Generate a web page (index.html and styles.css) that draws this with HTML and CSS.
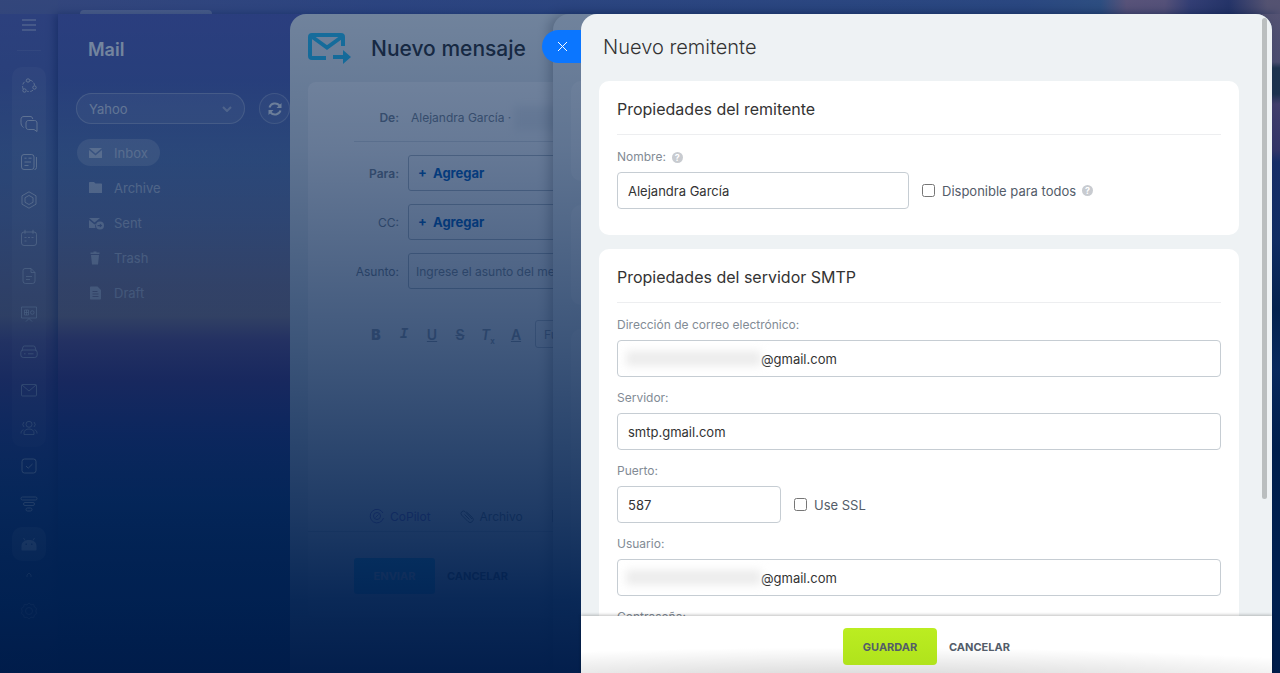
FILE: index.html
```
<!DOCTYPE html>
<html lang="es">
<head>
    <meta charset="UTF-8">
    <meta name="viewport" content="width=device-width, initial-scale=1.0">
    <title>Nuevo remitente</title>
    <link rel="stylesheet" href="styles.css">
</head>
<body>
    <div class="app">
        <nav class="sidebar" aria-label="Menú principal">
            <button class="menu-toggle" aria-label="Menú">
                <svg width="16" height="12" viewBox="0 0 16 12"><path d="M1 1h14M1 6h14M1 11h14"/></svg>
            </button>
            <div class="menu-group">
                <a href="#" class="menu-item" aria-label="Colaboración"><svg viewBox="0 0 18 18"><path d="M10 3.200a5.500 5.500 0 0 1 4.500 5M13 13.200a6 6 0 0 1-6 1M3.200 12a6 6 0 0 1 3-8.200" stroke-dasharray="3 1.500"/><circle cx="8" cy="3.500" r="1.700"/><circle cx="14.500" cy="10.500" r="1.700"/><circle cx="4.500" cy="13.500" r="1.700"/></svg></a>
                <a href="#" class="menu-item bright" aria-label="Chat"><svg viewBox="0 0 18 18"><path d="M3.500 12.500C1.500 11 1 9.500 1 7.500V4.500C1 2.500 2 1.500 4 1.500h6c2 0 2.500 1 2.700 2.500M8.500 5.500h6c1.500 0 2.500 1 2.500 2.500v8.500l-3-2H8.500C7 14.500 6 13.500 6 12V8c0-1.500 1-2.500 2.500-2.500z"/></svg></a>
                <a href="#" class="menu-item bright" aria-label="Noticias"><svg viewBox="0 0 18 18"><rect x="1.500" y="1.500" width="12.500" height="15" rx="2.500"/><path d="M16.500 4v10.500a2 2 0 0 1-2 2M4.500 5.200h2M8.500 5.200h3M4.500 9h6.500M4.500 12.500h4"/></svg></a>
                <a href="#" class="menu-item bright" aria-label="Espacios"><svg viewBox="0 0 18 18"><path d="M9 .8l7 4v8.400l-7 4-7-4V4.800z"/><path d="M9 4.500l4 2.200v4.600l-4 2.200-4-2.200V6.700z"/></svg></a>
                <a href="#" class="menu-item" aria-label="Calendario"><svg viewBox="0 0 18 18"><rect x="1.500" y="3" width="15" height="13.500" rx="2.500"/><path d="M5 .8v4M13 .8v4M4.500 8.500h2M8 8.500h2M11.500 8.500h2M4.500 12h2"/></svg></a>
                <a href="#" class="menu-item" aria-label="Documentos"><svg viewBox="0 0 18 18"><path d="M5 1.500h6l4 4V14a2.500 2.500 0 0 1-2.500 2.500h-7A2.500 2.500 0 0 1 3 14V3.500a2 2 0 0 1 2-2zM11 1.500v4h4M6 9.500h6M6 12.500h4"/></svg></a>
                <a href="#" class="menu-item" aria-label="Pizarras"><svg viewBox="0 0 18 18"><path d="M1.500 2h15v11h-15zM6 16.500l3-3 3 3"/><path d="M4.500 5h4v5h-4zM4.500 7.500h4M6.500 5v5"/><circle cx="12.300" cy="7.500" r="1.800"/></svg></a>
                <a href="#" class="menu-item" aria-label="Drive"><svg viewBox="0 0 18 18"><rect x=".8" y="7" width="16.400" height="7.500" rx="2.500"/><path d="M2 7.500l1-3.500c.3-.8.8-1 1.500-1h9c.7 0 1.200.2 1.500 1l1 3.500M4 10.800h1.500M8 10.800h5.500"/></svg></a>
                <a href="#" class="menu-item" aria-label="Correo"><svg viewBox="0 0 18 18"><rect x="1.500" y="3.500" width="15" height="11.500" rx="1"/><path d="M2 4l7 6 7-6"/></svg></a>
                <a href="#" class="menu-item" aria-label="Grupos"><svg viewBox="0 0 18 18"><circle cx="9" cy="5.300" r="3"/><path d="M4 15.500v-1.500c0-2.500 2-4 5-4s5 1.500 5 4v1.500zM4 3a3.500 3.500 0 0 0 0 5M14 3a3.500 3.500 0 0 1 0 5M1 14.500c0-2 .7-3.200 2.500-3.800M17 14.500c0-2-.7-3.200-2.500-3.800"/></svg></a>
            </div>
            <a href="#" class="menu-item low" aria-label="Tareas"><svg viewBox="0 0 18 18"><rect x="2" y="2" width="14" height="14" rx="2.500"/><path d="M6 9l2.200 2.200L12.500 7"/></svg></a>
            <a href="#" class="menu-item low" aria-label="CRM"><svg viewBox="0 0 18 18"><rect x="1" y="2" width="16" height="3" rx="1.500"/><rect x="3.500" y="7.500" width="11" height="3" rx="1.500"/><rect x="6" y="13" width="6" height="3" rx="1.500"/></svg></a>
            <a href="#" class="menu-item low active" aria-label="Market"><svg viewBox="0 0 18 18"><path class="fill" fill-rule="evenodd" d="M1.500 14.500V11c0-3.500 3-6 7.500-6s7.500 2.500 7.500 6v3.500c0 .8-.5 1-1 1h-13c-.5 0-1-.2-1-1zM5.500 8.500v1.500h1.500V8.500zM11 8.500v1.500h1.500V8.500z"/><path d="M5 5.500L3.500 3M13 5.500L14.500 3"/></svg></a>
            <a href="#" class="menu-more" aria-label="Más"><svg width="6" height="6" viewBox="0 0 6 6"><path d="M1 5V3l2-2 2 2v2"/></svg></a>
            <a href="#" class="menu-item low" aria-label="Ajustes"><svg viewBox="0 0 18 18"><path d="M9 1l2 1.800 2.700-.4.700 2.600L16.700 6.500 15.800 9l.9 2.500-2.300 1.500-.7 2.600-2.700-.4L9 17l-2-1.800-2.700.4-.7-2.600-2.300-1.500L2.200 9l-.9-2.500L3.600 5l.7-2.600 2.700.4z"/><circle cx="9" cy="9" r="3.500"/></svg></a>
        </nav>

        <section class="mail">
            <h2>Mail</h2>
            <div class="mailbox">
                <div class="mailbox-select">
                    <select aria-label="Buzón"><option>Yahoo</option></select>
                    <svg width="10" height="6" viewBox="0 0 10 6"><path d="M1 1l4 4 4-4"/></svg>
                </div>
                <button class="refresh" aria-label="Actualizar">
                    <svg width="16" height="16" viewBox="0 0 16 16"><path d="M2.500 6.500a5.800 5.800 0 0 1 10-2M13.500 9.500a5.800 5.800 0 0 1-10 2"/><path class="fill" d="M14.500 2v5h-5zM1.500 14V9h5z"/></svg>
                </button>
            </div>
            <ul class="folders">
                <li><a href="#" class="current"><svg viewBox="0 0 16 14"><path d="M1 2h13L7.500 7.500zM1 4l6.500 5.500L14 4v8H1z"/></svg>Inbox</a></li>
                <li><a href="#"><svg viewBox="0 0 16 14"><path d="M1 2c0-.6.400-1 1-1h4l1.500 1.500H13c.6 0 1 .4 1 1V12H1z"/></svg>Archive</a></li>
                <li><a href="#"><svg viewBox="0 0 16 14"><path d="M1 2h11L6.500 6.500zM1 4l5.500 4.500L8 7.500A5 5 0 0 0 7.500 12H1z"/><path fill-rule="evenodd" d="M12 5.500a4 4 0 1 1 0 8 4 4 0 0 1 0-8zM9.500 9v1.200h2.300v1.600l2.500-2.200-2.500-2.200V9z"/></svg>Sent</a></li>
                <li><a href="#"><svg viewBox="0 0 16 14"><path d="M2.500 1.500h3V.5h3v1h3V3h-9zM3 4h8l-1 9.500H4z"/></svg>Trash</a></li>
                <li><a href="#"><svg viewBox="0 0 16 14"><path fill-rule="evenodd" d="M3 .5h6.500L13 4v8.500c0 .6-.4 1-1 1H3c-.6 0-1-.4-1-1v-11c0-.6.400-1 1-1zM4.500 5v1h5V5zM4.500 7.500v1h6v-1zM4.500 10v1h6v-1z"/></svg>Draft</a></li>
            </ul>
        </section>
    </div>

    <div class="slider message">
        <header class="message-header">
            <svg width="43" height="31" viewBox="0 0 43 31"><path d="M18 25H4a2 2 0 0 1-2-2V4a2 2 0 0 1 2-2h29a2 2 0 0 1 2 2v9M3 3l16 11.500L35 3"/><path class="fill" d="M25 22h10v-5l8 7-8 7v-5H25z"/></svg>
            <h1>Nuevo mensaje</h1>
        </header>
        <div class="message-card">
            <div class="compose-row from">
                <span class="compose-label strong">De:</span>
                <span class="from-name">Alejandra García · <i class="smudge"></i></span>
            </div>
            <div class="compose-row">
                <span class="compose-label strong">Para:</span>
                <button class="add-field">+&nbsp; Agregar</button>
            </div>
            <div class="compose-row">
                <span class="compose-label">CC:</span>
                <button class="add-field">+&nbsp; Agregar</button>
            </div>
            <div class="compose-row">
                <label class="compose-label" for="subject">Asunto:</label>
                <input id="subject" class="subject" type="text" placeholder="Ingrese el asunto del mensaje">
            </div>
            <div class="editor-tools">
                <button><b>B</b></button>
                <button class="serif"><i>I</i></button>
                <button><u>U</u></button>
                <button><s>S</s></button>
                <button class="clear-format"><i>T</i><sub>x</sub></button>
                <button><u>A</u></button>
                <button class="font-pick">Fuente</button>
            </div>
            <div class="attach-bar">
                <button class="copilot"><svg width="16" height="16" viewBox="0 0 16 16"><path d="M14 5A6.800 6.800 0 1 0 14.500 10"/><circle cx="8" cy="8" r="3.500"/><path d="M6.500 9.500l3-3"/></svg>CoPilot</button>
                <button><svg width="16" height="16" viewBox="0 0 16 16"><path d="M13 11L6 3.500a2.500 2.500 0 0 0-3.500 3.500l6.500 6.500a3 3 0 0 0 4.500-4L7.500 4M5.500 6.500l5 5"/></svg>Archivo</button>
                <button><svg width="16" height="16" viewBox="0 0 16 16"><path d="M2 2h12v12H2zM5 6h6M5 9h6"/></svg>Crear</button>
            </div>
            <div class="message-actions">
                <button class="send">ENVIAR</button>
                <button class="plain">CANCELAR</button>
            </div>
        </div>
    </div>

    <div class="slider middle">
        <div class="ghost-card short"></div>
        <div class="ghost-card medium"></div>
        <div class="ghost-card tall"></div>
    </div>

    <div class="overlay"></div>

    <div class="slider sender">
        <button class="close" aria-label="Cerrar">
            <svg width="11" height="11" viewBox="0 0 11 11"><path d="M1 1l9 9M10 1L1 10"/></svg>
        </button>
        <form class="sender-form">
            <div class="sender-body">
                <h1>Nuevo remitente</h1>

                <section class="card">
                    <h2>Propiedades del remitente</h2>
                    <div class="field">
                        <div class="field-label"><label for="name">Nombre:</label><button type="button" class="help" aria-label="Ayuda">?</button></div>
                        <div class="field-line">
                            <input id="name" class="text-input medium" type="text" value="Alejandra García">
                            <label class="check"><input type="checkbox">Disponible para todos</label>
                            <button type="button" class="help" aria-label="Ayuda">?</button>
                        </div>
                    </div>
                </section>

                <section class="card">
                    <h2>Propiedades del servidor SMTP</h2>
                    <div class="field">
                        <div class="field-label"><label for="email">Dirección de correo electrónico:</label></div>
                        <div class="field-line hidden-user">
                            <input id="email" class="text-input" type="text" value="@gmail.com">
                        </div>
                    </div>
                    <div class="field">
                        <div class="field-label"><label for="server">Servidor:</label></div>
                        <div class="field-line">
                            <input id="server" class="text-input" type="text" value="smtp.gmail.com">
                        </div>
                    </div>
                    <div class="field">
                        <div class="field-label"><label for="port">Puerto:</label></div>
                        <div class="field-line">
                            <input id="port" class="text-input small" type="text" value="587">
                            <label class="check"><input type="checkbox">Use SSL</label>
                        </div>
                    </div>
                    <div class="field">
                        <div class="field-label"><label for="user">Usuario:</label></div>
                        <div class="field-line hidden-user">
                            <input id="user" class="text-input" type="text" value="@gmail.com">
                        </div>
                    </div>
                    <div class="field">
                        <div class="field-label"><label for="password">Contraseña:</label></div>
                        <div class="field-line">
                            <input id="password" class="text-input" type="password">
                        </div>
                    </div>
                </section>
            </div>
            <footer class="sender-footer">
                <button type="submit" class="save">GUARDAR</button>
                <button type="button" class="plain">CANCELAR</button>
            </footer>
        </form>
        <div class="scroll-thumb"></div>
    </div>
</body>
</html>
```

FILE: styles.css
```
* {
    box-sizing: border-box;
}
body {
    margin: 0;
    height: 100vh;
    overflow: hidden;
    font-family: Inter, "Liberation Sans", sans-serif;
    font-size: 13px;
    color: #333;
    background:
        linear-gradient(90deg, #6b6fae 0%, #5b6bb6 30%, #5872b8 80%, #5f80b8 86%, #b88aa8 88%, #b287a8 91%, #6a5f9e 93%, #4d4a86 96%, #b08a98 99%) top / 100% 14px no-repeat,
        linear-gradient(180deg, #b48c9c 0, #a8869a 62px, #444c50 68px, #444c50 94px, #9c6a94 104px, #80568e 150px, #3a4690 162px, #34488e 240px, #0e2a50 310px, #26488c 370px, #001c3c 450px, #002450 100%) right / 24px 100% no-repeat,
        linear-gradient(180deg, #5a5eb4 0, #5a66b4 80px, #6c84b8 160px, #848cb4 220px, #a8929e 290px, #b49898 316px, #8c6498 340px, #6a4490 380px, #45449a 430px, #204a90 500px, #00204c 100%);
}
button, input, select {
    font: inherit;
    color: inherit;
}
button {
    border: none;
    background: none;
    padding: 0;
    cursor: pointer;
}
h1, h2 {
    margin: 0;
}
a {
    color: inherit;
    text-decoration: none;
}
svg {
    display: block;
    flex: none;
    fill: none;
    stroke: currentColor;
}
svg .fill {
    fill: currentColor;
    stroke: none;
}

/* main app */
.app {
    display: flex;
    height: 100%;
    color: #fff;
}
.sidebar {
    width: 58px;
    flex: none;
    display: flex;
    flex-direction: column;
    align-items: center;
    background: rgba(110, 120, 170, 0.2);
}
.menu-toggle {
    width: 24px;
    height: 51px;
    border-bottom: 1px solid rgba(255, 255, 255, 0.15);
    display: flex;
    align-items: center;
    justify-content: center;
    opacity: 0.7;
}
.menu-group {
    margin-top: 16px;
    border-radius: 10px;
    background: rgba(255, 255, 255, 0.08);
}
.menu-item {
    width: 34px;
    height: 38px;
    flex: none;
    display: flex;
    align-items: center;
    justify-content: center;
    color: rgba(255, 255, 255, 0.7);
}
.menu-item svg {
    width: 18px;
    height: 18px;
}
.menu-item.bright {
    color: rgba(255, 255, 255, 0.8);
}
.menu-item.low {
    color: #fff;
}
.menu-item.active {
    height: 34px;
    margin: 4px 0 0;
    border-radius: 10px;
    background: rgba(255, 255, 255, 0.25);
}
.menu-more {
    padding: 11px 0 14px;
}
.mail {
    flex: 1;
    margin-top: 14px;
    padding: 24px 16px;
    box-shadow: -3px 0 8px rgba(0, 20, 80, 0.4);
    position: relative;
}
/* tab of the page underneath */
.mail::before {
    content: "";
    position: absolute;
    left: 22px;
    top: -4px;
    width: 132px;
    height: 4px;
    border-radius: 6px 6px 0 0;
    background: rgba(255, 255, 255, 0.3);
}
.mail h2 {
    padding-left: 14px;
    font-size: 18px;
    line-height: 24px;
    font-weight: 600;
}
.mailbox {
    display: flex;
    gap: 14px;
    margin: 31px 2px 15px;
}
.mailbox-select {
    position: relative;
    width: 169px;
}
.mailbox-select select {
    width: 100%;
    height: 31px;
    padding: 0 12px;
    appearance: none;
    border: 1px solid rgba(255, 255, 255, 0.35);
    border-radius: 16px;
    background: rgba(255, 255, 255, 0.12);
    color: rgba(255, 255, 255, 0.85);
}
.mailbox-select svg {
    position: absolute;
    right: 13px;
    top: 13px;
    stroke-width: 2;
    opacity: 0.5;
}
.refresh {
    width: 31px;
    height: 31px;
    display: flex;
    align-items: center;
    justify-content: center;
    border: 1px solid rgba(255, 255, 255, 0.3);
    border-radius: 50%;
    background: rgba(255, 255, 255, 0.08);
}
.refresh svg {
    stroke-width: 2;
}
.folders {
    margin: 0 3px;
    padding: 0;
    list-style: none;
    display: grid;
    gap: 8px;
    justify-items: start;
}
.folders a {
    display: flex;
    align-items: center;
    gap: 10px;
    height: 27px;
    padding: 0 12px 0 11px;
    border-radius: 14px;
    color: rgba(255, 255, 255, 0.7);
}
.folders .current {
    background: rgba(255, 255, 255, 0.25);
}
.folders svg {
    width: 16px;
    height: 14px;
    fill: currentColor;
    stroke: none;
}

/* side panels */
.slider {
    position: absolute;
    top: 14px;
    right: 8px;
    bottom: 0;
    border-radius: 16px 16px 0 0;
    background: #eef2f4;
}
.message {
    left: 290px;
    padding: 0 18px;
    overflow: hidden;
}
.message-header {
    display: flex;
    align-items: center;
    gap: 20px;
    height: 68px;
}
.message-header svg {
    color: #2fc6f6;
    stroke-width: 4;
}
.message-header h1 {
    font-size: 21px;
    font-weight: 500;
}
.message-card {
    padding: 12px 18px 24px 46px;
    border-radius: 8px;
    background: #fff;
    color: #828b95;
}
.compose-row {
    display: flex;
    align-items: center;
    gap: 9px;
    margin-bottom: 13px;
}
.compose-row.from {
    height: 48px;
    gap: 12px;
    border-bottom: 1px solid #dfe3e7;
}
.compose-label {
    width: 45px;
    text-align: right;
    font-size: 12px;
}
.compose-label.strong {
    font-weight: 600;
}
.from-name {
    display: flex;
    align-items: center;
    gap: 3px;
    font-size: 12px;
}
.smudge {
    width: 80px;
    height: 24px;
    background: #eff1f4;
    filter: blur(4px);
}
.add-field, .subject {
    flex: 1;
    height: 36px;
    padding: 0 9px;
    border: 1px solid #b8c0c8;
    border-radius: 3px;
    background: none;
    text-align: left;
}
.add-field {
    color: #0b66c3;
    font-weight: 700;
}
.subject {
    padding: 0 7px;
    font-size: 12px;
}
.subject::placeholder {
    color: #8f98a1;
}
.editor-tools {
    display: flex;
    gap: 4px;
    margin-top: 31px;
    padding-left: 10px;
    color: #a4abb4;
}
.editor-tools button {
    width: 24px;
    height: 28px;
    font-size: 14px;
    font-weight: 600;
}
.editor-tools .serif {
    font-family: "Liberation Mono", monospace;
}
.editor-tools sub {
    font-size: 8px;
    line-height: 0;
}
.editor-tools .font-pick {
    width: 90px;
    margin-left: 3px;
    padding-left: 8px;
    border: 1px solid #c8ced4;
    border-radius: 3px;
    text-align: left;
    font-size: 12px;
    font-weight: 400;
}
.attach-bar {
    display: flex;
    gap: 28px;
    margin: 158px 0 26px -46px;
    padding: 0 0 5px 61px;
    border-bottom: 1px solid #d8dee4;
}
.attach-bar button {
    display: flex;
    align-items: center;
    gap: 5px;
    height: 20px;
    font-size: 12px;
}
.attach-bar .copilot {
    color: #8e7ad0;
}
.message-actions {
    display: flex;
    gap: 12px;
}
.send {
    width: 81px;
    height: 36px;
    border-radius: 3px;
    background: #3bc8f5;
    color: #fff;
    font-size: 11px;
    font-weight: 700;
}
.plain {
    color: #535c69;
    font-size: 11px;
    font-weight: 700;
}
.middle {
    left: 553px;
    padding: 67px 33px 0 18px;
    display: flex;
    flex-direction: column;
    gap: 24px;
    box-shadow: -4px 0 12px rgba(0, 0, 0, 0.25);
}
.ghost-card {
    border-radius: 10px;
    background: #f8fafb;
}
.ghost-card.short {
    height: 100px;
}
.ghost-card.medium {
    height: 100px;
}
.ghost-card.tall {
    flex: 1;
}
.overlay {
    position: absolute;
    inset: 0;
    background: linear-gradient(180deg, rgba(0, 32, 78, 0.52) 0%, rgba(0, 32, 80, 0.6) 22%, rgba(0, 32, 80, 0.74) 50%, rgba(0, 32, 80, 0.88) 76%, rgba(0, 32, 80, 0.96) 89%, rgba(0, 28, 74, 0.99) 100%);
}

/* new sender */
.sender {
    left: 581px;
}
.close {
    position: absolute;
    left: -39px;
    top: 16px;
    width: 39px;
    height: 33px;
    padding-left: 2px;
    display: flex;
    align-items: center;
    justify-content: center;
    border-radius: 17px 0 0 17px;
    background: #0b76ff;
    color: #fff;
}
.sender-form {
    height: 100%;
    display: flex;
    flex-direction: column;
}
.sender-body {
    flex: 1;
    min-height: 0;
    overflow: hidden;
    padding: 0 33px 0 18px;
}
.sender-body h1 {
    padding-left: 4px;
    font-size: 20px;
    font-weight: 300;
    line-height: 67px;
}
.card {
    margin-bottom: 14px;
    padding: 0 18px 26px;
    border-radius: 10px;
    background: #fff;
}
.card h2 {
    margin-bottom: 14px;
    padding-top: 3px;
    border-bottom: 1px solid #edeef0;
    font-size: 16px;
    font-weight: 400;
    line-height: 50px;
}
.field + .field {
    margin-top: 13px;
}
.field-label {
    display: flex;
    align-items: center;
    gap: 6px;
    margin-bottom: 7px;
    font-size: 12px;
    line-height: 16px;
    color: #828b95;
}
.field-line {
    display: flex;
    align-items: center;
    position: relative;
}
.text-input {
    width: 100%;
    height: 37px;
    padding: 0 10px;
    border: 1px solid #c6cdd3;
    border-radius: 4px;
    background: #fff;
}
.text-input.medium {
    width: 292px;
}
.text-input.small {
    width: 164px;
}
/* the user part of the address is blurred out */
.hidden-user .text-input {
    padding-left: 143px;
}
.hidden-user::before {
    content: "";
    position: absolute;
    left: 9px;
    top: 11px;
    width: 135px;
    height: 15px;
    background: #ececec;
    filter: blur(4px);
}
.check {
    display: flex;
    align-items: center;
    margin-left: 13px;
    color: #535c69;
}
.check input {
    width: 13px;
    height: 13px;
    margin: 0 7px 0 0;
}
.help {
    width: 11px;
    height: 11px;
    border-radius: 50%;
    background: #c8cbd0;
    color: #fff;
    font-size: 9px;
    line-height: 11px;
    font-weight: 700;
}
.check + .help {
    margin-left: 6px;
}
.sender-footer {
    height: 57px;
    flex: none;
    display: flex;
    align-items: center;
    justify-content: center;
    gap: 12px;
    padding-top: 4px;
    position: relative;
    background:
        radial-gradient(ellipse 90% 70% at 40% 125%, rgba(0, 0, 0, 0.2), rgba(0, 0, 0, 0)),
        #fff;
    box-shadow: 0 -1px 3px rgba(0, 0, 0, 0.25);
}
.save {
    width: 94px;
    height: 37px;
    border-radius: 4px;
    background: linear-gradient(180deg, #bbed21, #b0e31c);
    color: #535c69;
    font-size: 11px;
    font-weight: 700;
}
.scroll-thumb {
    position: absolute;
    top: 4px;
    right: 5px;
    width: 5px;
    height: 73%;
    border-radius: 3px;
    background: #babebf;
}
```
